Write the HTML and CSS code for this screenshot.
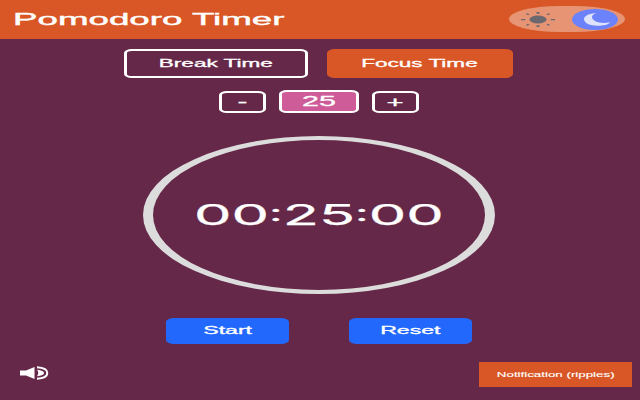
FILE: index.html
```html
<!DOCTYPE html>
<html lang="en">
<head>
<meta charset="utf-8">
<title>Pomodoro Timer</title>
<link rel="stylesheet" href="styles.css">
</head>
<body>
<header class="header">
  <h1 class="title"><span class="wide">Pomodoro Timer</span></h1>
  <button class="switch" aria-label="Theme">
    <svg class="sun" viewBox="0 0 34 17">
      <ellipse cx="17" cy="8.5" rx="8.6" ry="4"/>
      <path d="M15.500 1h3v1.800h-3zM15.500 14.200h3V16h-3zM0 8h4.300v1.200H0zM29.700 8H34v1.200h-4.300zM4.800 2.600h2.400l1.300 1.500H6.200zM29.200 2.600h-2.400l-1.300 1.500h2.300zM4.800 14.400h2.400l1.300-1.500H6.200zM29.200 14.400h-2.400l-1.300-1.500h2.300z"/>
    </svg>
    <span class="knob">
      <svg class="moon" viewBox="0 0 27 13"><path d="M12.500 .1C5 .5 0 3.100 0 6.300c0 3.700 6 6.500 13.500 6.500 6 0 11-1.300 12.900-3.600-2 .5-4 .8-6.400.8-7 0-12-2.600-12-5.900 0-1.600 1.500-3 4.500-4z"/></svg>
    </span>
  </button>
</header>
<main class="main">
  <div class="modes">
    <button class="mode outlined"><span class="wide">Break Time</span></button>
    <button class="mode active"><span class="wide">Focus Time</span></button>
  </div>
  <div class="stepper">
    <button class="step outlined"><span class="wide">-</span></button>
    <div class="minutes"><span class="wide">25</span></div>
    <button class="step outlined"><span class="wide">+</span></button>
  </div>
  <div class="dial"><span class="wide">00<span class="colon">:</span>25<span class="colon">:</span>00</span></div>
  <div class="actions">
    <button class="action"><span class="wide">Start</span></button>
    <button class="action"><span class="wide">Reset</span></button>
  </div>
</main>
<footer class="footer">
  <svg class="volume" viewBox="0 0 29 14"><path d="M0 4.500h6L14.500 1v12L6 9.500H0z"/><path d="M17 3.800Q24 4.500 24 7T17 10.200q2.500-3.200 0-6.400z"/><path d="M17 1.300q10.300.6 10.300 5.700T17 12.700" class="wave"/></svg>
  <div class="notice"><span class="wide">Notification (ripples)</span></div>
</footer>
</body>
</html>
```
FILE: styles.css
```css
* { box-sizing: border-box; }
body {
  margin: 0;
  height: 400px;
  overflow: hidden;
  display: flex;
  flex-direction: column;
  background: #652849;
  color: #fff;
  font-family: "Liberation Sans", sans-serif;
}
button {
  padding: 0;
  border: 0;
  color: inherit;
  font: inherit;
}
/* Extended lettering: glyphs are drawn at about twice their normal width. */
.wide {
  display: inline-block;
  white-space: nowrap;
  transform: scaleX(2.1);
  -webkit-text-stroke: 0.3px currentColor;
}
.header {
  height: 39px;
  flex: none;
  display: flex;
  align-items: flex-start;
  justify-content: space-between;
  padding: 0 15px 0 13px;
  background: #d95726;
}
.title { margin: 0; font-size: 17px; font-weight: 400; line-height: 40px; }
.title .wide { transform: scaleX(2.160); transform-origin: left; -webkit-text-stroke-width: 0.4px; }
.switch {
  width: 116px;
  height: 26px;
  margin-top: 6px;
  display: flex;
  align-items: center;
  justify-content: space-between;
  padding: 0 7px 0 12px;
  border-radius: 50px / 13px;
  background: #e69473;
}
.sun { width: 34px; height: 17px; fill: #6b6870; }
.knob {
  width: 46px;
  height: 21px;
  border-radius: 50%;
  background: #6c82fb;
  display: flex;
  align-items: center;
  justify-content: center;
}
.moon { width: 27px; height: 13px; fill: #dfe2fb; margin-left: 4px; }
.main {
  display: flex;
  flex-direction: column;
  align-items: center;
  padding-right: 2px;
}
.modes { display: flex; gap: 19px; margin: 10px 1px 0 0; }
.mode {
  width: 186px;
  height: 29px;
  padding-bottom: 1px;
  border-radius: 8px / 4px;
  font-size: 11px;
}
.mode .wide { transform: scaleX(2.05); }
.outlined, .minutes {
  border: solid #fff;
  border-width: 2px 3px;
  background: transparent;
}
.mode.outlined { width: 184px; }
.mode.active { padding-right: 1px; background: #d95726; }
.stepper { display: flex; align-items: center; gap: 13px; margin-top: 12px; }
.step {
  width: 47px;
  height: 22px;
  border-radius: 8px / 4px;
  font-size: 14px;
  line-height: 18px;
}
.minutes {
  width: 80px;
  height: 23px;
  border-radius: 8px / 4px;
  background: #cd5c98;
  font-size: 14.500px;
  line-height: 19px;
  text-align: center;
}
.dial {
  width: 352px;
  height: 158px;
  margin-top: 23px;
  display: flex;
  align-items: center;
  justify-content: center;
  border: solid #dcdcdc;
  border-width: 4.500px 10px;
  border-radius: 50%;
  font-family: Inter, sans-serif;
  font-size: 29px;
  line-height: 1;
  padding-bottom: 2px;
}
.dial .wide { transform: scaleX(2.050); -webkit-text-stroke-width: 0.250px; }
.colon {
  font-size: 23px;
  line-height: 0;
  vertical-align: 4px;
}
.actions { display: flex; gap: 60px; margin-top: 24px; }
.action {
  width: 123px;
  height: 26px;
  padding-bottom: 2px;
  border-radius: 8px / 4px;
  background: #2268fc;
  font-size: 11px;
}
.footer {
  display: flex;
  align-items: flex-start;
  justify-content: space-between;
  margin-top: 18px;
  padding: 0 8px 0 20px;
}
.volume { width: 29px; height: 14px; margin-top: 4px; fill: #fff; }
.volume .wave { fill: none; stroke: #fff; stroke-width: 2; }
.notice {
  width: 153px;
  height: 25px;
  background: #d95726;
  font-size: 6.500px;
  line-height: 25px;
  text-align: center;
}
.notice .wide { transform: scaleX(2.050); -webkit-text-stroke-width: 0.1px; }
```
